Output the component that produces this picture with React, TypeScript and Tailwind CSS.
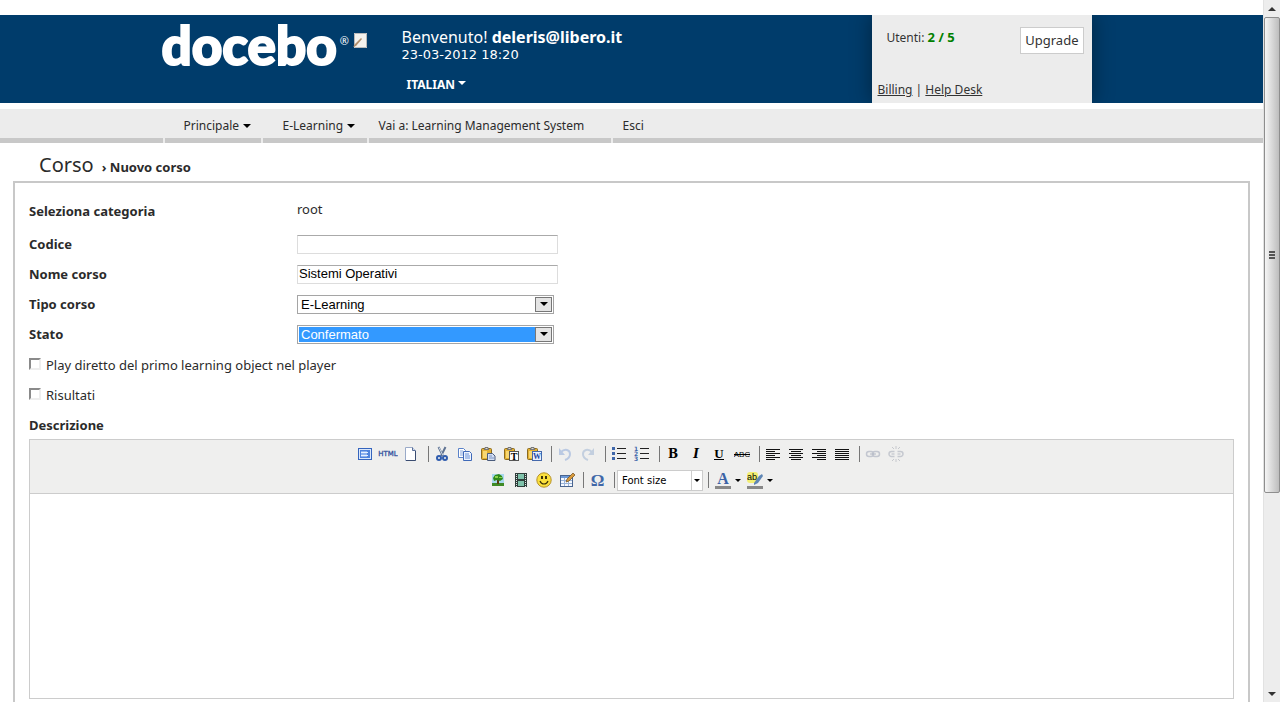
import { useState, type ReactNode } from "react";

const menuItems = [
  { label: "Principale", arrow: true, className: "w-24 pl-[19px]" },
  { label: "E-Learning", arrow: true, className: "w-[104px] pl-5" },
  {
    label: "Vai a: Learning Management System",
    arrow: false,
    className: "w-[242px] pl-2.5",
  },
  { label: "Esci", arrow: false, className: "grow pl-2.5" },
];

function Caret({ className = "" }: { className?: string }) {
  return (
    <svg
      className={`shrink-0 ${className}`}
      width="8"
      height="4"
      viewBox="0 0 8 4"
      fill="currentColor"
      aria-hidden="true"
    >
      <path d="M0 0h8L4 4z" />
    </svg>
  );
}

function Icon({ children }: { children: ReactNode }) {
  return (
    <svg width="16" height="16" viewBox="0 0 16 16" aria-hidden="true">
      {children}
    </svg>
  );
}

const Clipboard = () => (
  <>
    <rect x="1.5" y="2.5" width="10" height="11" rx="1" fill="#e2b032" stroke="#8a6a20" />
    <path d="M3 5h4v7H3z" fill="#f7d772" />
    <path d="M4 3.5h5M5 1.5h3v2H5z" fill="#d8d8d8" stroke="#777" />
  </>
);

const icons: Record<string, ReactNode> = {
  Fullscreen: (
    <Icon>
      <rect x="1" y="2" width="14" height="12" fill="#dbe8fb" />
      <rect x="1.5" y="2.5" width="13" height="11" fill="none" stroke="#3564bd" />
      <rect x="3" y="4" width="10" height="8" fill="#4f83dd" />
      <path d="M4 5h6v6H4z" fill="#8db2f0" />
      <path d="M4 6.500h7M4 9.500h7" stroke="#e6f0ff" />
    </Icon>
  ),
  HTML: (
    <svg width="20" height="16" viewBox="0 0 20 16" aria-hidden="true">
      <text x="10" y="10" textAnchor="middle" fontSize="7" fontFamily="DejaVu Sans, sans-serif" fill="#31519c" stroke="#31519c" strokeWidth=".3">
        HTML
      </text>
    </svg>
  ),
  "New document": (
    <Icon>
      <path d="M2.500 1.500h7l3 3v10h-10z" fill="#fff" stroke="#9aaac8" />
      <path d="M9.500 1.500v3h3" fill="#cbd8ee" stroke="#5b6f96" />
      <path d="M12.500 5v9.500H3" fill="none" stroke="#3a4c70" />
    </Icon>
  ),
  Cut: (
    <Icon>
      <path d="M4.500 1l4.500 9M11.500 1L7 10" stroke="#5f7392" strokeWidth="2" />
      <path d="M5 1.500l4 8" stroke="#c9d4e2" />
      <circle cx="5" cy="12" r="2" fill="none" stroke="#2f5cae" strokeWidth="2" />
      <circle cx="11" cy="12" r="2" fill="none" stroke="#2f5cae" strokeWidth="2" />
    </Icon>
  ),
  Copy: (
    <Icon>
      <path d="M1.500 2.500h5l2 2v7h-7z" fill="#fff" stroke="#5b82c9" />
      <path d="M3 5h3M3 7h4M3 9h4" stroke="#86a6de" />
      <path d="M6.500 5.500h6l2 2v7h-8z" fill="#eef4ff" stroke="#3f69b8" />
      <path d="M8 8h4M8 10h5M8 12h5" stroke="#6890d6" />
    </Icon>
  ),
  Paste: (
    <Icon>
      <Clipboard />
      <path d="M7.500 7.500h5l2.500 2.500v4.500H7.500z" fill="#d3def4" stroke="#4a5b7c" />
      <path d="M9 10h3M9 12h5" stroke="#7c95c4" />
    </Icon>
  ),
  "Paste as text": (
    <Icon>
      <Clipboard />
      <rect x="6.500" y="5.500" width="9" height="9" fill="#fff" stroke="#555" />
      <text x="11" y="13.500" textAnchor="middle" fontSize="10" fontWeight="bold" fontFamily="Liberation Serif, serif">
        T
      </text>
    </Icon>
  ),
  "Paste from Word": (
    <Icon>
      <Clipboard />
      <rect x="6.500" y="5.500" width="9" height="9" fill="#e8f0ff" stroke="#4468ab" />
      <text x="11" y="13" textAnchor="middle" fontSize="8" fontWeight="bold" fontFamily="Liberation Serif, serif" fill="#1b48a3">
        W
      </text>
    </Icon>
  ),
  Undo: (
    <Icon>
      <path d="M4 6c4-4 9-2 9 2 0 3-2 5-5 6" fill="none" stroke="#bac9e2" strokeWidth="2" />
      <path d="M2 2v7h6z" fill="#bac9e2" />
    </Icon>
  ),
  Redo: (
    <Icon>
      <path d="M12 6C8 2 3 4 3 8c0 3 2 5 5 6" fill="none" stroke="#c3cfdf" strokeWidth="2" />
      <path d="M14 2v7H8z" fill="#c3cfdf" />
    </Icon>
  ),
  "Bulleted list": (
    <Icon>
      <path d="M1 1h3v3H1zM1 6h3v3H1zM1 11h3v3H1z" fill="#3f67aa" />
      <path d="M6 2.500h9M6 7.500h9M6 12.500h9" stroke="#222" />
    </Icon>
  ),
  "Numbered list": (
    <Icon>
      <g fontSize="6" fontWeight="bold" fontFamily="DejaVu Sans, sans-serif" fill="#3f67aa">
        <text x="0" y="5">1</text>
        <text x="0" y="10">2</text>
        <text x="0" y="15">3</text>
      </g>
      <path d="M6 2.500h9M6 7.500h9M6 12.500h9" stroke="#222" />
    </Icon>
  ),
  Bold: <span className="font-['DejaVu_Serif',serif] text-xs font-black">B</span>,
  Italic: <span className="font-['DejaVu_Serif',serif] text-xs font-black italic">I</span>,
  Underline: (
    <Icon>
      <text x="8" y="12" textAnchor="middle" fontSize="13" fontWeight="bold" fontFamily="Liberation Serif, serif">
        U
      </text>
      <path d="M3 13.500h10" stroke="#000" />
    </Icon>
  ),
  Strikethrough: (
    <Icon>
      <text x="8" y="11" textAnchor="middle" fontSize="8" fontFamily="Liberation Sans, sans-serif">
        ABC
      </text>
      <path d="M0 8.500h16" stroke="#000" />
    </Icon>
  ),
  "Align left": (
    <Icon>
      <path d="M1 3.500h14M1 5.500h9M1 7.500h14M1 9.500h9M1 11.500h14M1 13.500h9" stroke="#111" />
    </Icon>
  ),
  "Align center": (
    <Icon>
      <path d="M1 3.500h14M3 5.500h10M1 7.500h14M3 9.500h10M1 11.500h14M3 13.500h10" stroke="#111" />
    </Icon>
  ),
  "Align right": (
    <Icon>
      <path d="M1 3.500h14M6 5.500h9M1 7.500h14M6 9.500h9M1 11.500h14M6 13.500h9" stroke="#111" />
    </Icon>
  ),
  Justify: (
    <Icon>
      <path d="M1 3.500h14M1 5.500h14M1 7.500h14M1 9.500h14M1 11.500h14M1 13.500h14" stroke="#111" />
    </Icon>
  ),
  Link: (
    <Icon>
      <rect x="1.500" y="5.500" width="7" height="5" rx="2.500" fill="none" stroke="#c3c7d0" strokeWidth="1.500" />
      <rect x="7.500" y="5.500" width="7" height="5" rx="2.500" fill="none" stroke="#c3c7d0" strokeWidth="1.500" />
      <path d="M5 8h6" stroke="#b3b8c4" />
    </Icon>
  ),
  Unlink: (
    <Icon>
      <path d="M6.500 5.500H3.500a2.500 2.500 0 000 5h3M9.500 5.500h3a2.500 2.500 0 010 5h-3" fill="none" stroke="#c6c9d0" strokeWidth="1.500" />
      <path d="M3.500 8h3M9.500 8h3" stroke="#b9bdc6" />
      <path d="M4 1l2 2M8 0v3M12 1l-2 2M4 15l2-2M8 16v-3M12 15l-2-2" stroke="#c6c8cd" />
    </Icon>
  ),
  Image: (
    <Icon>
      <rect x="2" y="2" width="12" height="12" fill="#a9d8ee" />
      <path d="M2 11h12v3H2z" fill="#3f8a25" />
      <path d="M7 8h2v4H7z" fill="#5a3c12" />
      <path d="M3 6l2-3 4-1 3 2 1 3-3 2-3-1-3 1z" fill="#2f8a1a" />
      <path d="M5 4h3v2H5zM9 5h3v1H9z" fill="#8ad04b" />
    </Icon>
  ),
  Media: (
    <Icon>
      <rect x="2" y="1" width="12" height="14" fill="#2f3d3a" />
      <path d="M5 2h6v5H5zM5 9h6v5H5z" fill="#7fc3ab" />
      <path d="M3.500 2v13M12.500 2v13" stroke="#dfe7e4" strokeDasharray="1 1" />
    </Icon>
  ),
  Smiley: (
    <Icon>
      <circle cx="8" cy="8" r="7.200" fill="#fbe03c" stroke="#b7922a" />
      <path d="M5 4h2v3H5zM9 4h2v3H9z" fill="#3d3208" />
      <path d="M4 9c1.500 4 6.500 4 8 0" fill="none" stroke="#3d3208" strokeWidth="1.200" />
    </Icon>
  ),
  Table: (
    <Icon>
      <rect x="1.500" y="3.500" width="12" height="11" fill="#f5f9ff" stroke="#49648f" />
      <path d="M2 4h11v2H2z" fill="#6c98d6" />
      <path d="M2 8.500h11M2 11.500h11M5.500 6v8M9.500 6v8" stroke="#9ab3d8" />
      <path d="M7 10l1-3 6-6 2 2-6 6z" fill="#d79a3d" stroke="#6d4c1d" strokeWidth=".7" />
    </Icon>
  ),
  "Special character": (
    <span className="font-['Liberation_Serif',serif] text-[17px] font-bold text-[#4067a8]">Ω</span>
  ),
};

const toolbarTop = [
  ["Fullscreen", "HTML", "New document"],
  ["Cut", "Copy", "Paste", "Paste as text", "Paste from Word"],
  ["Undo", "Redo"],
  ["Bulleted list", "Numbered list"],
  ["Bold", "Italic", "Underline", "Strikethrough"],
  ["Align left", "Align center", "Align right", "Justify"],
  ["Link", "Unlink"],
];

function ToolButton({ name }: { name: string }) {
  return (
    <button
      type="button"
      aria-label={name}
      className="flex h-[22px] w-[23px] items-center justify-center leading-none text-black"
    >
      {icons[name]}
    </button>
  );
}

function Separator() {
  return <div className="ml-[5px] mr-0.5 h-4 w-px bg-[#777]" />;
}

function ColorButton({ name, children }: { name: string; children: ReactNode }) {
  return (
    <button type="button" aria-label={name} className="flex h-[22px] w-8 items-center gap-1 pl-1 text-black">
      <svg width="16" height="18" viewBox="0 0 16 18" aria-hidden="true">
        {children}
        <path d="M0 15h16v3H0z" fill="#888" />
      </svg>
      <svg width="6" height="3" viewBox="0 0 6 3" aria-hidden="true">
        <path d="M0 0h6L3 3z" />
      </svg>
    </button>
  );
}

function SelectField({
  id,
  options,
  highlighted,
}: {
  id: string;
  options: string[];
  highlighted?: boolean;
}) {
  return (
    <div className="flex h-[19px] w-[257px] border border-[#a5a5a5] bg-white p-px">
      <select
        id={id}
        className={`min-w-0 grow appearance-none pl-0.5 font-['Liberation_Sans',sans-serif] text-[13px] leading-[15px] outline-none ${
          highlighted ? "bg-[#3399ff] text-white" : "bg-white text-black"
        }`}
      >
        {options.map((option) => (
          <option key={option}>{option}</option>
        ))}
      </select>
      <span className="flex w-[17px] items-center justify-center border border-[#777] bg-[#e4e4e4] text-black">
        <Caret />
      </span>
    </div>
  );
}

function Field({ id, label, children }: { id: string; label: string; children: ReactNode }) {
  return (
    <div className="flex h-[30px] items-center">
      <label htmlFor={id} className="w-[268px] shrink-0 pt-px font-bold">
        {label}
      </label>
      {children}
    </div>
  );
}

function CheckField({ id, label }: { id: string; label: string }) {
  return (
    <div className="flex h-[30px] items-center gap-[5px]">
      <input
        id={id}
        type="checkbox"
        className="size-3 appearance-none border-2 border-t-[#8a8a8a] border-r-[#eee] border-b-[#eee] border-l-[#8a8a8a] bg-white checked:bg-[#3399ff]"
      />
      <label htmlFor={id} className="pt-1">
        {label}
      </label>
    </div>
  );
}

function Header() {
  return (
    <header className="mt-[15px] bg-[#003c6b]">
      <div className="mx-auto flex h-[88px] max-w-[940px] text-white">
        <div className="flex w-60 items-start">
          <span className="pt-0.5 font-[Lato,sans-serif] text-[53px] leading-[56px] font-black [-webkit-text-stroke:2px_white]">
            docebo
          </span>
          <span className="ml-[3px] pt-5 text-[11px] leading-3">®</span>
          <svg className="mt-[18px] ml-1" width="14" height="16" viewBox="0 0 14 16" aria-hidden="true">
            <path d="M1 0h13v15H1z" fill="#f4f2ee" />
            <path d="M1.500 .5h12v14h-12z" fill="none" stroke="#b9b9b9" />
            <path d="M0 14l2-3 6-6 1 1-6 7z" fill="#b08e6c" />
          </svg>
        </div>
        <div className="grow pt-3">
          <p className="text-base leading-5">
            Benvenuto! <strong>deleris@libero.it</strong>
          </p>
          <p className="font-['DejaVu_Sans',sans-serif] text-[13px] leading-4">23-03-2012 18:20</p>
          <button type="button" className="mt-3 ml-[5px] flex gap-[3px] text-xs leading-5 font-bold">
            ITALIAN <Caret className="mt-1.5" />
          </button>
        </div>
        <div className="mr-2.5 flex w-[220px] flex-col justify-between bg-[#ececec] pt-3 pr-2 pb-1 pl-1.5 text-[#333] shadow-[0_0_20px_rgba(0,0,0,0.4)] [clip-path:inset(0_-30px)]">
          <div className="flex items-start justify-between pl-[9px]">
            <p className="text-xs leading-5">
              Utenti: <strong className="text-[13px] text-[#008000]">2 / 5</strong>
            </p>
            <button type="button" className="h-[27px] border border-[#ccc] bg-white px-1 text-[13px]">
              Upgrade
            </button>
          </div>
          <p className="text-xs leading-[18px]">
            <a href="#billing" className="underline">
              Billing
            </a>{" "}
            |{" "}
            <a href="#helpdesk" className="underline">
              Help Desk
            </a>
          </p>
        </div>
      </div>
    </header>
  );
}

function Menu() {
  return (
    <nav className="mt-1.5 flex h-[34px] gap-0.5 bg-[#ececec] text-xs">
      <div className="grow basis-0 border-b-[5px] border-[#c8c8c8]" />
      <div className="flex w-[936px] gap-0.5">
        {menuItems.map((item) => (
          <a
            key={item.label}
            href="#menu"
            className={`flex items-center gap-1 border-b-[5px] border-[#c8c8c8] pt-1 whitespace-nowrap ${item.className}`}
          >
            {item.label}
            {item.arrow && <Caret className="text-black" />}
          </a>
        ))}
      </div>
      <div className="-ml-0.5 grow basis-0 border-b-[5px] border-[#c8c8c8]" />
    </nav>
  );
}

function Editor() {
  return (
    <div className="border border-[#ccc]">
      <div className="border-b border-[#ccc] bg-[#efefee] pt-[3px] pr-0.5 pb-0.5">
        <div className="flex h-[22px] items-center justify-center">
          {toolbarTop.map((group, index) => (
            <div key={group[0]} className="flex items-center">
              {index > 0 && <Separator />}
              {group.map((name) => (
                <ToolButton key={name} name={name} />
              ))}
            </div>
          ))}
        </div>
        <div className="mt-1 flex h-[22px] items-center justify-center">
          <ToolButton name="Image" />
          <ToolButton name="Media" />
          <ToolButton name="Smiley" />
          <ToolButton name="Table" />
          <Separator />
          <ToolButton name="Special character" />
          <Separator />
          <div className="flex h-[21px] w-[86px] border border-[#ccc] bg-white">
            <select
              aria-label="Font size"
              className="min-w-0 grow appearance-none pl-1 font-['DejaVu_Sans',sans-serif] text-[10px] text-black outline-none"
            >
              <option>Font size</option>
            </select>
            <span className="flex w-[11px] items-center justify-center border-l border-[#ccc]">
              <svg width="6" height="3" viewBox="0 0 6 3" aria-hidden="true">
                <path d="M0 0h6L3 3z" />
              </svg>
            </span>
          </div>
          <Separator />
          <ColorButton name="Text color">
            <text x="8" y="13" textAnchor="middle" fontSize="16" fontWeight="bold" fontFamily="Liberation Serif, serif" fill="#3c63a6">
              A
            </text>
          </ColorButton>
          <ColorButton name="Background color">
            <rect x="0" y="1" width="11" height="11" rx="3" fill="#f3ee72" />
            <path d="M7 12l5-7 3-2 1 2-5 7-4 2z" fill="#5f86b5" />
            <text x="0" y="9" fontSize="9" fontFamily="Liberation Sans, sans-serif">
              ab
            </text>
          </ColorButton>
        </div>
      </div>
      <textarea aria-label="Descrizione" className="block h-[204px] w-full resize-none bg-white p-2 outline-none" />
    </div>
  );
}

function Scrollbar() {
  return (
    <div className="flex w-[17px] shrink-0 flex-col border-l border-[#e2e2e2] bg-[#ededed] text-[#333]">
      <button type="button" aria-label="Scroll up" className="flex h-[17px] shrink-0 items-center justify-center">
        <Caret className="rotate-180" />
      </button>
      <div className="flex h-[476px] items-center justify-center rounded-xs border border-[#8e8e8e] bg-linear-to-r from-[#f5f5f5] to-[#bdbdbd]">
        <div className="flex w-1.5 flex-col gap-px">
          <span className="h-0.5 bg-[#555]" />
          <span className="h-0.5 bg-[#555]" />
          <span className="h-0.5 bg-[#555]" />
        </div>
      </div>
      <button
        type="button"
        aria-label="Scroll down"
        className="mt-auto flex h-[17px] shrink-0 items-center justify-center"
      >
        <Caret />
      </button>
    </div>
  );
}

export default function App() {
  const [name, setName] = useState("Sistemi Operativi");
  const [code, setCode] = useState("");

  const inputClass =
    "h-[19px] w-[261px] border border-[#ddd] border-t-[#aaa] bg-white px-px font-['Liberation_Sans',sans-serif] text-[13px] text-black outline-none";

  return (
    <div className="flex h-screen overflow-hidden bg-white font-['Noto_Sans',sans-serif] text-[13px] text-[#2b2b2b]">
      <div className="min-w-0 grow">
        <Header />
        <Menu />
        <main className="px-[13px]">
          <h1 className="flex h-[38px] items-baseline pt-2 pl-[26px] text-xl leading-7">
            Corso
            <span className="ml-2 text-[13px] font-bold">› Nuovo corso</span>
          </h1>
          <form className="border-2 border-[#c8c8c8] px-3.5 pt-2.5 pb-10">
            <div className="flex h-9 items-center">
              <span className="w-[268px] pt-px font-bold">Seleziona categoria</span>
              <span className="pb-0.5">root</span>
            </div>
            <Field id="codice" label="Codice">
              <input
                id="codice"
                type="text"
                className={inputClass}
                value={code}
                onChange={(e) => setCode(e.target.value)}
              />
            </Field>
            <Field id="nome" label="Nome corso">
              <input
                id="nome"
                type="text"
                className={inputClass}
                value={name}
                onChange={(e) => setName(e.target.value)}
              />
            </Field>
            <Field id="tipo" label="Tipo corso">
              <SelectField id="tipo" options={["E-Learning"]} />
            </Field>
            <Field id="stato" label="Stato">
              <SelectField id="stato" options={["Confermato"]} highlighted />
            </Field>
            <CheckField id="play" label="Play diretto del primo learning object nel player" />
            <CheckField id="risultati" label="Risultati" />
            <p className="flex h-[30px] items-center pt-[3px] font-bold">Descrizione</p>
            <Editor />
          </form>
        </main>
      </div>
      <Scrollbar />
    </div>
  );
}
